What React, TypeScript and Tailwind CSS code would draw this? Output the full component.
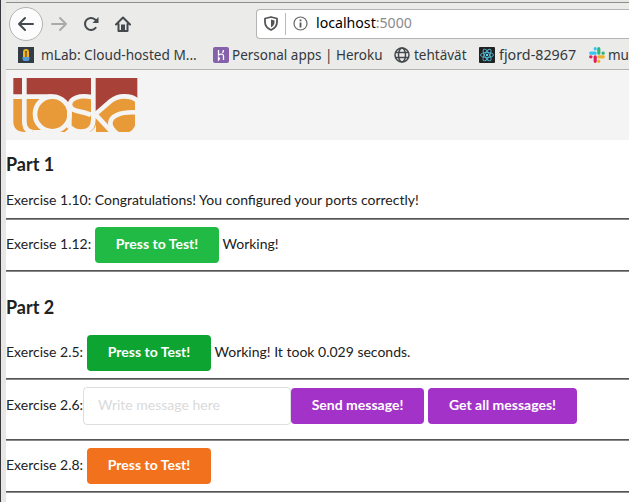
import React from "react";

const INK = "#43494c";

function Toolbar() {
  return (
    <div className="flex h-[41px] items-center pl-[3px]">
      <div className="flex size-[34px] shrink-0 items-center justify-center rounded-full border border-[#b5b3b1] bg-[#fcfcfc]">
        <svg width="18" height="16" viewBox="0 0 18 16" fill="none" stroke={INK} strokeWidth="2" strokeLinecap="round" strokeLinejoin="round">
          <path d="M8 2L2 8L8 14M2 8H16" />
        </svg>
      </div>
      <svg className="ml-[7px] shrink-0" width="18" height="16" viewBox="0 0 18 16" fill="none" stroke="#aaa" strokeWidth="2" strokeLinecap="round" strokeLinejoin="round">
        <path d="M10 2L16 8L10 14M16 8H2" />
      </svg>
      <svg className="ml-[15px] shrink-0" width="16" height="16" viewBox="0 0 16 16" fill="none" stroke={INK} strokeWidth="2">
        <path d="M12.6 11.8A6 6 0 1 1 12 3.4L14 5.5" strokeLinecap="round" />
        <path d="M15.500 1V7H9.500Z" fill={INK} stroke="none" />
      </svg>
      <svg className="ml-[16px] shrink-0" width="16" height="16" viewBox="0 0 16 16" fill="none" stroke={INK} strokeWidth="2" strokeLinejoin="round" strokeLinecap="round">
        <path d="M1 8.500L8 1.500L15 8.500M3.500 8V15H12.500V8" />
        <path d="M6 15V8.500H10V15Z" fill={INK} stroke="none" />
      </svg>
      <div className="ml-[125px] flex h-[30px] flex-1 items-center rounded-l-[4px] border border-r-0 border-[#b4b4b2] bg-white pl-[7px]">
        <svg className="shrink-0" width="14" height="15" viewBox="0 0 14 15">
          <path d="M7 1L13 2.500V6C13 10 10.500 12.500 7 14C3.500 12.500 1 10 1 6V2.500Z" fill="none" stroke="#555" strokeWidth="1.800" strokeLinejoin="round" />
          <path d="M7 3.500L10.500 4.400V6C10.500 8.500 9 10.400 7 11.300Z" fill="#555" />
        </svg>
        <div className="ml-[7px] h-[22px] w-px bg-[#b9b9b9]" />
        <svg className="ml-[7px] shrink-0" width="15" height="15" viewBox="0 0 15 15">
          <circle cx="7.500" cy="7.500" r="6.500" fill="none" stroke="#666" strokeWidth="1.200" />
          <path d="M6.600 3.500h1.800v1.800H6.600zM6.600 6.500h1.800v5H6.600z" fill="#555" />
        </svg>
        <span className="ml-[8px] origin-left scale-x-[0.975] pb-px whitespace-nowrap text-[14.500px] text-black">
          localhost<span className="text-[#8b8b8b]">:5000</span>
        </span>
      </div>
    </div>
  );
}

function Bookmarks() {
  return (
    <div className="flex h-[22px] items-center overflow-hidden whitespace-nowrap pl-[12px] text-[14.500px] text-[#33393b]">
      <svg className="shrink-0" width="16" height="16" viewBox="0 0 16 16">
        <path d="M0 0H16V16H0Z" fill="#333c45" />
        <path d="M6 10V5a2 2 0 0 1 4 0V10" fill="none" stroke="#f5b51b" strokeWidth="2" />
        <path d="M8 5V11" stroke="#dd981c" strokeWidth="1.200" />
        <path d="M4.500 10H11.500V11.500Q11.500 14 9.500 14H6.500Q4.500 14 4.500 11.500Z" fill="#569bd6" />
      </svg>
      <span className="ml-[7px] w-[156px] origin-left scale-x-[0.94]">mLab: Cloud-hosted M...</span>
      <svg className="ml-[16px] shrink-0" width="16" height="16" viewBox="0 0 16 16">
        <rect width="16" height="16" rx="2" fill="#8560ab" />
        <path d="M5.500 3V8C7 7 10.500 6.500 10.500 9V13M10.500 3Q10.500 4.500 9.500 6M5.500 10.500V13L6.500 11.800Z" fill="none" stroke="#fff" strokeWidth="1.300" />
      </svg>
      <span className="ml-[3px] w-[151px] origin-left scale-x-[0.93]">Personal apps | Heroku</span>
      <svg className="ml-[11px] shrink-0" width="16" height="16" viewBox="0 0 16 16" fill="none" stroke={INK} strokeWidth="1.500">
        <circle cx="8" cy="8" r="7" />
        <ellipse cx="8" cy="8" rx="3.500" ry="7" />
        <path d="M1.500 5.500H14.500M1.500 10.500H14.500" />
      </svg>
      <span className="ml-[4px] w-[53px] origin-left scale-x-[0.93]">tehtävät</span>
      <svg className="ml-[12px] shrink-0" width="16" height="16" viewBox="0 0 16 16">
        <rect width="16" height="16" rx="1" fill="#222" />
        <g fill="none" stroke="#53b9d5" strokeWidth="0.900">
          <ellipse cx="8" cy="8" rx="6.500" ry="2.500" />
          <ellipse cx="8" cy="8" rx="6.500" ry="2.500" transform="rotate(60 8 8)" />
          <ellipse cx="8" cy="8" rx="6.500" ry="2.500" transform="rotate(120 8 8)" />
        </g>
        <circle cx="8" cy="8" r="1.200" fill="#61dafb" />
      </svg>
      <span className="ml-[4px] w-[78px] origin-left scale-x-[0.985]">fjord-82967</span>
      <svg className="ml-[12px] shrink-0" width="16" height="16" viewBox="0 0 16 16" strokeWidth="3.200" strokeLinecap="round">
        <path d="M1.700 6.200H6.200M6.200 1.700V2" stroke="#36c5f0" />
        <path d="M9.800 1.700V6.200M14.300 6.200H14" stroke="#2eb67d" />
        <path d="M14.300 9.800H9.800M9.800 14.300V14" stroke="#ecb22e" />
        <path d="M6.200 14.300V9.800M1.700 9.800H2" stroke="#e01e5a" />
      </svg>
      <span className="ml-[3px] origin-left scale-x-[0.93]">mu</span>
    </div>
  );
}

function Logo() {
  return (
    <svg width="126" height="56" viewBox="39 33 378 168" className="block">
      <path d="M40 92H405V198H75Q40 198 40 165Z" fill="#e89938" />
      <path d="M40 36H412V99Q395 90 375 91Q352 91 332 106L291 140H280V92Q220 88 207 110Q190 92 160 92H40Z" fill="#a84238" />
      <g fill="none" stroke="#f4f4f4" strokeWidth="14">
        <path d="M73 33V165Q73 196 98 198" />
        <path d="M38 92H158" />
        <ellipse cx="157" cy="144" rx="52" ry="52" />
        <path d="M274 93C238 86 210 97 210 116C210 139 250 134 273 147" />
        <path d="M280 33V160C280 188 263 197 243 197C228 197 217 192 208 182V128" />
        <path d="M343 206L286 145L332 105Q350 91 372 91Q402 91 413 106" />
        <path d="M408 139C360 137 331 150 331 172C331 185 339 194 352 203" />
      </g>
      <path d="M190 202L208 186L226 202ZM262 202Q280 196 288 176V202ZM378 202Q402 195 406 175V202ZM98 192H130L142 202H98Z" fill="#f4f4f4" />
    </svg>
  );
}

function Rule() {
  return <hr className="h-[2px] border-0 border-t border-[#555] bg-[#888]" />;
}

function Button({ className, children }: { className: string; children: React.ReactNode }) {
  return (
    <button className={`h-[36px] shrink-0 rounded-[4px] pb-[2px] text-[14px] leading-[14px] font-bold text-white ${className}`}>
      {children}
    </button>
  );
}

export default function App() {
  return (
    <div className="flex h-[502px] w-[629px] overflow-hidden bg-white">
      <div className="w-[6px] shrink-0 border-l border-[#39393d] bg-[#e8e7e6]" />
      <div className="min-w-0 flex-1">
        <header className="h-[70px] border-b border-[#b3b3b1] bg-[#ebebea] font-['Noto_Sans',sans-serif]">
          <div className="h-[3px] border-b border-[#8e8e8c] bg-[#e6e6e4]" />
          <Toolbar />
          <Bookmarks />
        </header>
        <main className="font-[Lato,sans-serif] text-[14px] leading-[20px] whitespace-nowrap text-[#212121]">
          <div className="h-[70px] bg-[#f4f4f4] pt-[7px] pl-[7px]">
            <Logo />
          </div>
          <h3 className="mt-[13px] text-[18px] leading-[23px] font-bold">Part 1</h3>
          <p className="mt-[14px] mb-[8px]">Exercise 1.10: Congratulations! You configured your ports correctly!</p>
          <Rule />
          <div className="flex h-[50px] items-center">
            <span className="w-[89px] pb-[2px]">Exercise 1.12:</span>
            <Button className="w-[124px] bg-[#21ba45]">Press to Test!</Button>
            <span className="ml-[3.500px] pb-[2px]">Working!</span>
          </div>
          <Rule />
          <h3 className="mt-[24px] text-[18px] leading-[23px] font-bold">Part 2</h3>
          <div className="mt-[9px] flex h-[50px] items-center">
            <span className="w-[81px] pb-[2px]">Exercise 2.5:</span>
            <Button className="w-[124px] bg-[#0ea432]">Press to Test!</Button>
            <span className="ml-[3.500px] pb-[2px]">Working! It took 0.029 seconds.</span>
          </div>
          <Rule />
          <div className="flex h-[59px] items-center pb-[7px]">
            <span className="w-[77px] pb-[2px]">Exercise 2.6:</span>
            <input placeholder="Write message here" className="h-[38px] w-[208px] rounded-[4px] border border-[#dededf] px-[14px] pb-[3px] text-[14px] placeholder:text-[#dadada]" />
            <Button className="w-[133px] bg-[#a333c8]">Send message!</Button>
            <Button className="ml-[4px] w-[149px] bg-[#a333c8]">Get all messages!</Button>
          </div>
          <Rule />
          <div className="flex h-[50px] items-center">
            <span className="w-[81px] pb-[2px]">Exercise 2.8:</span>
            <Button className="w-[124px] bg-[#f2711c]">Press to Test!</Button>
          </div>
          <Rule />
        </main>
      </div>
    </div>
  );
}
